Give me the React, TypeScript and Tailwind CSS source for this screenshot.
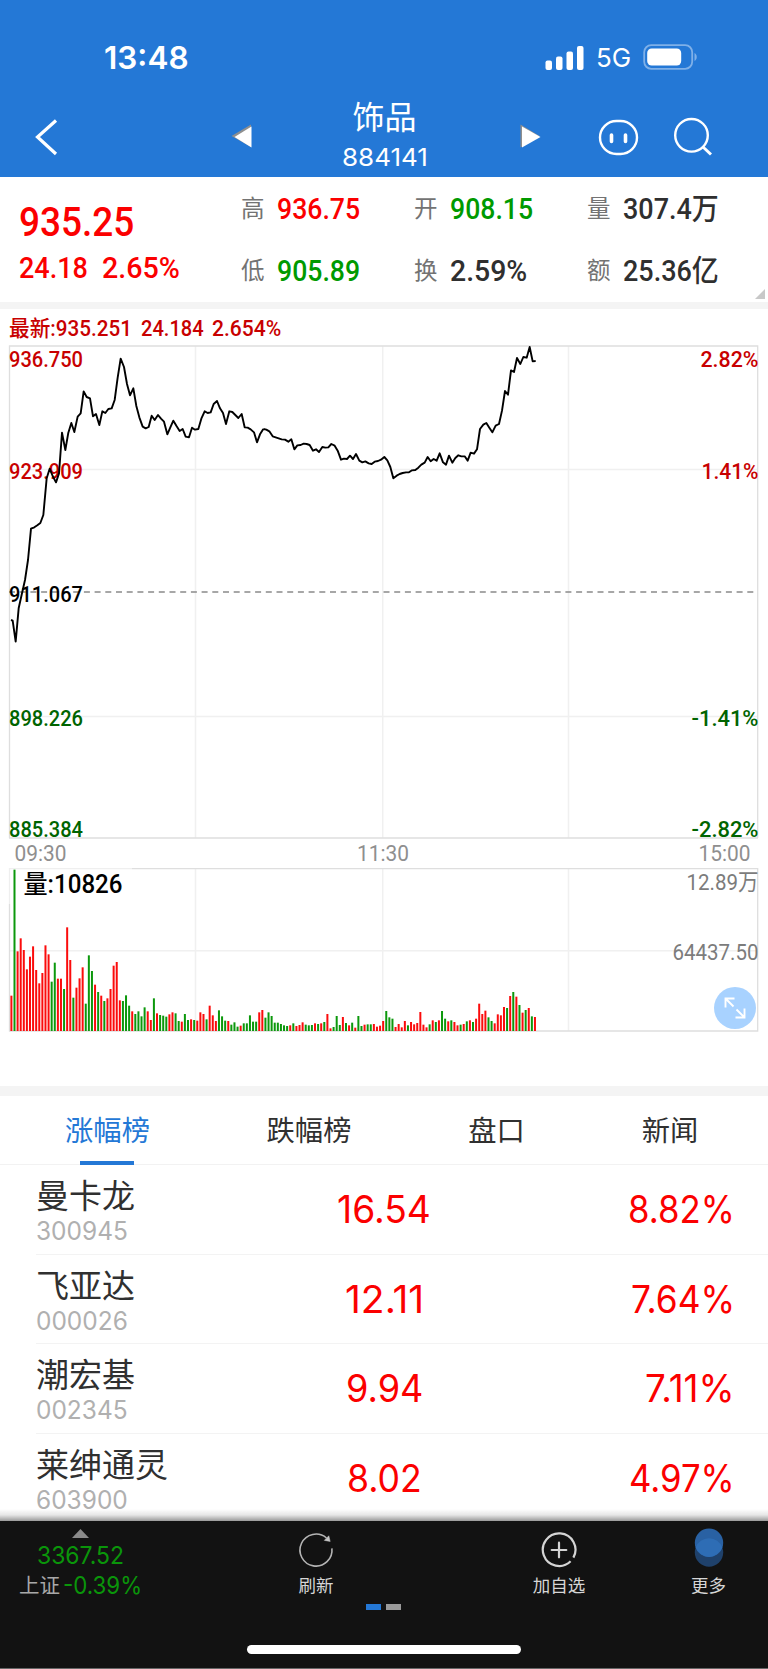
import { useLayoutEffect, useRef, useState } from "react";
import type { ReactNode } from "react";

/* Text squeezed horizontally so that it takes exactly `w` pixels. */
function Fit({ w, className = "", children }: { w: number; className?: string; children: ReactNode }) {
  const ref = useRef<HTMLSpanElement>(null);
  const [scale, setScale] = useState(1);
  useLayoutEffect(() => {
    if (ref.current) setScale(w / ref.current.offsetWidth);
  }, [w]);
  return (
    <span className={`inline-flex shrink-0 justify-start ${className}`} style={{ width: w }}>
      <span
        ref={ref}
        className="inline-block shrink-0 origin-left whitespace-pre"
        style={{ transform: `scaleX(${scale})` }}
      >
        {children}
      </span>
    </span>
  );
}

const LINE_A =
  "33,855 38,857 47,920 56,820 66,775 75,735 84,675 93,581 103,577 112,571 121,564 130,540 140,430 149,401 158,423 168,442 177,415 186,293 196,345 205,293 214,264 223,291 233,245 242,235 251,169 260,186 270,190 279,244 288,237 298,270 307,229 316,234 325,222 335,220 344,195 353,128 362,71 372,96 381,147 390,181 400,160 409,213 418,247 428,275 437,280 446,276 455,242 464,255 474,240 483,251 492,260 502,298 511,277 520,257 530,274 539,288 548,282 557,305 567,307 576,278 585,284 595,282 604,251 614,229 623,234 632,232 641,207 651,198 660,220 669,234 678,267 688,229 697,231 706,240 715,249 725,237 734,277 743,278 752,283 762,292 771,322 780,298 790,282";
const LINE_B =
  "10,282 19,284 28,289 38,304 47,307 56,310 65,313 75,314 85,320 94,313 103,343 112,331 122,330 131,326 140,327 149,330 159,347 168,343 177,351 187,336 196,338 205,337 214,327 224,332 233,347 243,374 252,371 261,372 270,362 279,372 288,357 298,377 307,382 316,379 326,385 335,387 344,380 354,378 363,374 373,366 382,376 391,396 400,430 410,422 419,417 428,414 438,412 447,412 456,406 466,405 475,398 484,389 494,383 503,366 512,379 521,372 530,377 539,355 549,382 558,389 567,362 577,383 586,369 595,361 604,364 614,364 623,377 632,353 642,356 651,343 660,282 670,269 679,264 688,278 697,292 707,272 717,267 726,227 735,168 744,179 753,106 762,111 771,69 781,87 790,66 800,68 809,36 818,79 827,78";

/* r = up minute, g = down minute; the number is the bar height in thirds of a pixel. */
const VOLUME =
  "r106 g484 r239 r278 r243 r185 r223 r254 r183 r143 r174 r257 r230 g148 g205 r157 r157 g126 r311 r213 g100 r130 r158 r191 g82 g227 g180 r139 g117 r106 g90 r98 r126 r196 r207 r92 g90 g107 g76 r59 g51 g59 g44 g71 r59 r33 g98 r53 g48 g46 g43 r50 r56 g53 g30 r28 g51 g33 r35 g33 r31 r56 r51 g35 r76 r47 r30 g62 g44 g31 r30 g19 g26 g13 r16 g23 g23 g47 g28 g28 r56 r63 g40 g56 g45 g25 g25 g21 g17 g15 r17 g23 r15 r18 r26 g19 g17 g18 r23 g21 r23 g27 r51 r8 g12 g45 g18 r42 g24 r17 g25 r10 g45 g15 r19 g20 g20 r21 r13 r16 r30 g60 g41 g37 r12 r21 r11 r30 g17 r27 r20 r24 r57 r19 r11 g20 r32 g27 r32 g60 g37 r29 g32 r27 r17 g19 r21 g29 r32 g27 r37 r82 r51 r61 g41 g30 r23 r50 r47 r72 g69 r105 g117 r103 g78 r55 g63 r69 g44 r42".split(
    " ",
  );

const STOCKS = [
  { name: "曼卡龙", code: "300945", price: "16.54", pw: 94, pct: "8.82%", cw: 107 },
  { name: "飞亚达", code: "000026", price: "12.11", pw: 79, pct: "7.64%", cw: 104 },
  { name: "潮宏基", code: "002345", price: "9.94", pw: 77, pct: "7.11%", cw: 90 },
  { name: "莱绅通灵", code: "603900", price: "8.02", pw: 75, pct: "4.97%", cw: 106 },
];

function StatusBar() {
  return (
    <div className="flex h-[92px] items-start justify-between pl-[104px] pr-[69px] pt-[38px]">
      <Fit w={85} className="pt-[1px] text-[31.500px] leading-[38px] font-semibold">
        13:48
      </Fit>
      <div className="flex items-center">
        <svg className="-mt-[1px] h-[26px] w-[40px]" viewBox="0 0 40 26" fill="white">
          <rect x="0.5" y="15.5" width="6.5" height="9.5" rx="2" />
          <rect x="11" y="11.5" width="6.5" height="13.5" rx="2" />
          <rect x="21.5" y="6.5" width="6.5" height="18.5" rx="2" />
          <rect x="32" y="1" width="6.5" height="24" rx="2" />
        </svg>
        <Fit w={35} className="ml-[11px] text-[26px] leading-[40px]">
          5G
        </Fit>
        <svg className="-mt-[2px] ml-[12px] h-[26px] w-[56px]" viewBox="0 0 56 26">
          <rect x="1.2" y="1.2" width="48" height="23.6" rx="7" fill="none" stroke="#7fb0e8" strokeWidth="1.8" />
          <rect x="4.2" y="4.5" width="34" height="17" rx="4.5" fill="white" />
          <path d="M51.5 9v8c3-1.5 3-6.500 0-8Z" fill="#7fb0e8" />
        </svg>
      </div>
    </div>
  );
}

function TitleBar() {
  return (
    <div className="flex h-[85px] items-start">
      <svg className="ml-[34px] mt-[26px] h-[38px] w-[26px]" viewBox="0 0 26 38" fill="none" stroke="white" strokeWidth="3.200">
        <path d="M22 2.500 3.500 19 22 36" />
      </svg>
      <svg className="ml-[171px] mt-[32px] h-[25px] w-[22px]" viewBox="0 0 22 25">
        <path d="M0.500 12 20 0.500V23Z" fill="#8f8f8f" />
        <path d="M3.500 13 20.500 2.500V23.500Z" fill="white" />
      </svg>
      <div className="flex w-[263px] flex-col items-center">
        <div className="mt-[7px] text-[32px] leading-[38px]">饰品</div>
        <Fit w={86} className="mt-[4px] text-[24.500px] leading-[32px]">
          884141
        </Fit>
      </div>
      <svg className="ml-[4px] mt-[32px] h-[25px] w-[22px]" viewBox="0 0 22 25">
        <path d="M0.500 0.500V23.500L19.500 12Z" fill="#8f8f8f" />
        <path d="M2 2.500V23.500L20.500 13Z" fill="white" />
      </svg>
      <svg className="ml-[56px] mt-[26px] h-[40px] w-[42px]" viewBox="0 0 42 40" fill="none" stroke="white">
        <rect x="2" y="3" width="37" height="33" rx="16.500" strokeWidth="2.400" />
        <path d="M13.500 17v6.500M27.500 17v6.500" strokeWidth="3.600" strokeLinecap="round" />
      </svg>
      <svg className="ml-[33px] mt-[24px] h-[42px] w-[42px]" viewBox="0 0 42 42" fill="none" stroke="white" strokeWidth="2.400">
        <circle cx="18.500" cy="19.300" r="16.300" />
        <path d="M30 31l8 7.500" strokeWidth="3" />
      </svg>
    </div>
  );
}

function Stat({ label, value, w, tone }: { label: string; value: string; w: number; tone: string }) {
  return (
    <div className="flex h-[62px] items-start">
      <span className="w-[36px] text-[23.500px] leading-[40px] text-[#737373]">{label}</span>
      <Fit w={w} className={`font-['Roboto','Noto_Sans_CJK_SC',sans-serif] text-[29.500px] leading-[40px] font-medium ${tone}`}>
        {value}
      </Fit>
    </div>
  );
}

function Quote() {
  return (
    <section className="relative flex h-[125px] bg-white">
      <div className="flex w-[241px] flex-col pl-[19px] font-['Roboto',sans-serif] font-medium text-[#fb0000]">
        <Fit w={115} className="mt-[21px] text-[40.500px] leading-[48px]">
          935.25
        </Fit>
        <div className="mt-[5px] flex text-[29px] leading-[34px]">
          <Fit w={69}>24.18</Fit>
          <Fit w={78} className="ml-[14px]">
            2.65%
          </Fit>
        </div>
      </div>
      <div className="grid grid-cols-[173px_173px_181px] content-start pt-[12px]">
        <Stat label="高" value="936.75" w={83} tone="text-[#fb0000]" />
        <Stat label="开" value="908.15" w={83} tone="text-[#009a00]" />
        <Stat label="量" value="307.4万" w={96} tone="text-[#2f2f2f]" />
        <Stat label="低" value="905.89" w={83} tone="text-[#009a00]" />
        <Stat label="换" value="2.59%" w={77} tone="text-[#2f2f2f]" />
        <Stat label="额" value="25.36亿" w={96} tone="text-[#2f2f2f]" />
      </div>
      <svg className="absolute bottom-[3px] right-[3px] size-[10px]" viewBox="0 0 9 9">
        <path d="M9 0V9H0Z" fill="#c8c8c8" />
      </svg>
    </section>
  );
}

type LabelProps = { x: number; y: number; w: number; fill: string; size?: number; thin?: boolean; children: string };

function Label({ x, y, w, fill, size = 22.5, thin = false, children }: LabelProps) {
  return (
    <text
      x={x}
      y={y}
      textLength={w}
      lengthAdjust="spacingAndGlyphs"
      fill={fill}
      fontSize={size}
      className={`font-['Roboto','Noto_Sans_CJK_SC',sans-serif] ${thin ? "font-normal" : "font-medium"}`}
    >
      {children}
    </text>
  );
}

function Chart() {
  return (
    <section className="relative h-[777px] bg-white">
      <div className="flex h-[36px] pl-[9px] font-['Roboto','Noto_Sans_CJK_SC',sans-serif] text-[22px] leading-[40px] font-medium text-[#c80000]">
        <Fit w={123}>最新:935.251</Fit>
        <Fit w={63} className="ml-[9px]">
          24.184
        </Fit>
        <Fit w={69} className="ml-[8px]">
          2.654%
        </Fit>
      </div>
      <svg className="block h-[700px] w-[768px]" viewBox="0 345 768 700" fill="none">
        <path d="M9 469.500H758M9 716.500H758M9 950.700H758" stroke="#f0f0f0" strokeWidth="1.500" />
        <path d="M195.500 346V838M382.700 346V838M568.500 346V838M195.500 869V1031M382.700 869V1031M568.500 869V1031" stroke="#f0f0f0" strokeWidth="1.500" />
        <path d="M9.500 838V346H757.700V838M9 838H758M132 868.700H757.700V1031H9.500V904" stroke="#dedede" strokeWidth="1.300" />
        <path d="M9.500 904V868.700H132" stroke="#efefef" strokeWidth="1.300" />
        <path d="M9 592.100H757" stroke="#8a8a8a" strokeWidth="1.500" strokeDasharray="6 4.700" />
        <Label x={9} y={367} w={74} fill="#c80000">936.750</Label>
        <Label x={9} y={478.5} w={74} fill="#c80000">923.909</Label>
        <Label x={9} y={602} w={74} fill="#000000">911.067</Label>
        <Label x={9} y={725.5} w={74} fill="#006400">898.226</Label>
        <Label x={9} y={836.5} w={74} fill="#006400">885.384</Label>
        <Label x={700.5} y={367} w={58} fill="#c80000">2.82%</Label>
        <Label x={701.5} y={478.5} w={57} fill="#c80000">1.41%</Label>
        <Label x={691.5} y={725.5} w={67} fill="#006400">-1.41%</Label>
        <Label x={691.5} y={836.5} w={67} fill="#006400">-2.82%</Label>
        <Label x={14.5} y={861} w={52} fill="#8f8f8f" size={22} thin>09:30</Label>
        <Label x={357} y={861} w={52} fill="#8f8f8f" size={22} thin>11:30</Label>
        <Label x={698.5} y={861} w={52} fill="#8f8f8f" size={22} thin>15:00</Label>
        <Label x={23.5} y={893} w={99} fill="#000000" size={25.5}>量:10826</Label>
        <Label x={686.5} y={890} w={72} fill="#7c7c7c" thin>12.89万</Label>
        <Label x={672.5} y={960} w={86} fill="#7c7c7c" thin>64437.50</Label>
        <g stroke="#000" strokeWidth="5.700" strokeLinejoin="round">
          <polyline transform="translate(0 335) scale(0.33333)" points={LINE_A} />
          <polyline transform="translate(260 335) scale(0.33333)" points={LINE_B} />
        </g>
        {VOLUME.map((bar, i) => {
          const h = Number(bar.slice(1)) / 3;
          return (
            <rect
              key={i}
              x={10.4 + i * 3.098}
              y={1031 - h}
              width={2}
              height={h}
              fill={bar[0] === "r" ? "#fb0c0c" : "#0c980c"}
            />
          );
        })}
      </svg>
      <button className="absolute right-[12px] top-[678px] flex size-[42px] items-center justify-center rounded-full bg-[#a8d2ff]">
        <svg className="size-[22px]" viewBox="0 0 22 22" fill="none" stroke="white" strokeWidth="1.900">
          <path d="M1.500 10.500V1.500H10.500M1.500 1.500 9.500 9.500M20.500 11.500V20.500H11.500M20.500 20.500 12.500 12.500" />
        </svg>
      </button>
    </section>
  );
}

function Tabs() {
  return (
    <nav className="flex h-[69px] border-b border-[#f2f2f2] bg-white text-[28.300px] text-[#303030]">
      <div className="relative flex w-[215px] justify-center pt-[15px] leading-[40px] text-[#2478d6]">
        涨幅榜
        <span className="absolute bottom-[-1px] left-[80px] h-[4px] w-[54px] bg-[#2478d6]" />
      </div>
      <div className="flex w-[188px] justify-center pt-[15px] leading-[40px]">跌幅榜</div>
      <div className="flex w-[187px] justify-center pt-[15px] leading-[40px]">盘口</div>
      <div className="flex w-[160px] justify-center pt-[15px] leading-[40px]">新闻</div>
    </nav>
  );
}

function StockList() {
  return (
    <section className="h-[356px] overflow-hidden bg-white">
      {STOCKS.map((s) => (
        <div key={s.code} className="ml-[36px] flex h-[89.500px] border-b border-[#f3f3f3]">
          <div className="flex w-[248px] flex-col">
            <div className="mt-[11px] text-[33px] leading-[40px] text-[#303030]">{s.name}</div>
            <Fit w={92} className="-mt-[2px] text-[25px] leading-[34px] text-[#b0b0b0]">
              {s.code}
            </Fit>
          </div>
          <div className="flex w-[200px] items-center justify-center text-[38px] leading-[44px] text-[#fb0000]">
            <Fit w={s.pw}>{s.price}</Fit>
          </div>
          <div className="flex w-[251px] items-center justify-end text-[38px] leading-[44px] text-[#fb0000]">
            <Fit w={s.cw}>{s.pct}</Fit>
          </div>
        </div>
      ))}
    </section>
  );
}

function Footer() {
  return (
    <footer className="relative h-[148px] border-b border-[#666] bg-[#121212] text-[17.500px] text-[#d6d6d6]">
      <div className="absolute inset-x-0 top-[-12px] h-[12px] bg-linear-to-b from-transparent via-black/10 to-black/40" />
      <div className="flex h-[83px]">
        <div className="flex w-[161px] flex-col items-center">
          <svg className="mt-[8px] h-[9px] w-[17px] shrink-0" viewBox="0 0 17 9">
            <path d="M8.500 0 17 9H0Z" fill="#8a8a8a" />
          </svg>
          <Fit w={87} className="mt-[2px] text-[24px] leading-[32px] text-[#0a950a]">
            3367.52
          </Fit>
          <div className="-mt-[1px] flex items-center leading-[30px]">
            <span className="text-[20.500px] text-[#a8a8a8]">上证</span>
            <Fit w={79} className="ml-[3px] text-[24px] text-[#0a950a]">
              -0.39%
            </Fit>
          </div>
        </div>
        <div className="flex w-[310px] flex-col items-center">
          <svg className="mt-[10px] size-[38px]" viewBox="0 0 38 38" fill="none" stroke="#b4b4b4" strokeWidth="1.600">
            <path d="M29.500 7A16 16 0 1 0 34.900 17.300" />
            <path d="M31.800 4.800 33.200 10.400 27.300 9.400Z" fill="#c4c4c4" stroke="#c4c4c4" strokeWidth="0.500" />
          </svg>
          <span className="mt-[4px] leading-[26px]">刷新</span>
        </div>
        <div className="flex w-[176px] flex-col items-center">
          <svg className="mt-[10px] size-[38px]" viewBox="0 0 38 38" fill="none" stroke="#d4d4d4" strokeWidth="2.200">
            <path d="M30.600 30.300A16.300 16.300 0 1 1 33.400 26.600" />
            <path d="M19 11.700V26.300M11.700 19H26.300" strokeLinecap="round" />
          </svg>
          <span className="mt-[4px] leading-[26px]">加自选</span>
        </div>
        <div className="flex w-[121px] flex-col items-center pl-[2px]">
          <svg className="mt-[7px] h-[40px] w-[30px]" viewBox="0 0 30 40">
            <circle cx="15" cy="24.500" r="14.200" fill="#1f416b" />
            <circle cx="15" cy="14.700" r="14.200" fill="#2961a3" />
            <path d="M1.670 19.600A14.200 14.200 0 0 1 28.330 19.600A14.200 14.200 0 0 1 1.670 19.600Z" fill="#2e6db5" />
          </svg>
          <span className="mt-[5px] leading-[26px]">更多</span>
        </div>
      </div>
      <div className="flex justify-center gap-[5px] pr-[1px]">
        <span className="h-[6px] w-[15px] bg-[#2478d6]" />
        <span className="h-[6px] w-[15px] bg-[#9a9a9a]" />
      </div>
      <div className="mx-auto mt-[35px] h-[9px] w-[274px] rounded-full bg-white" />
    </footer>
  );
}

export default function App() {
  return (
    <main className="h-[1669px] w-[768px] overflow-hidden bg-white font-['Inter','Noto_Sans_CJK_SC',sans-serif]">
      <header className="h-[177px] bg-[#2478d6] text-white">
        <StatusBar />
        <TitleBar />
      </header>
      <Quote />
      <div className="h-[7px] bg-[#f4f4f4]" />
      <Chart />
      <div className="h-[10px] bg-[#f4f4f4]" />
      <Tabs />
      <StockList />
      <Footer />
    </main>
  );
}
